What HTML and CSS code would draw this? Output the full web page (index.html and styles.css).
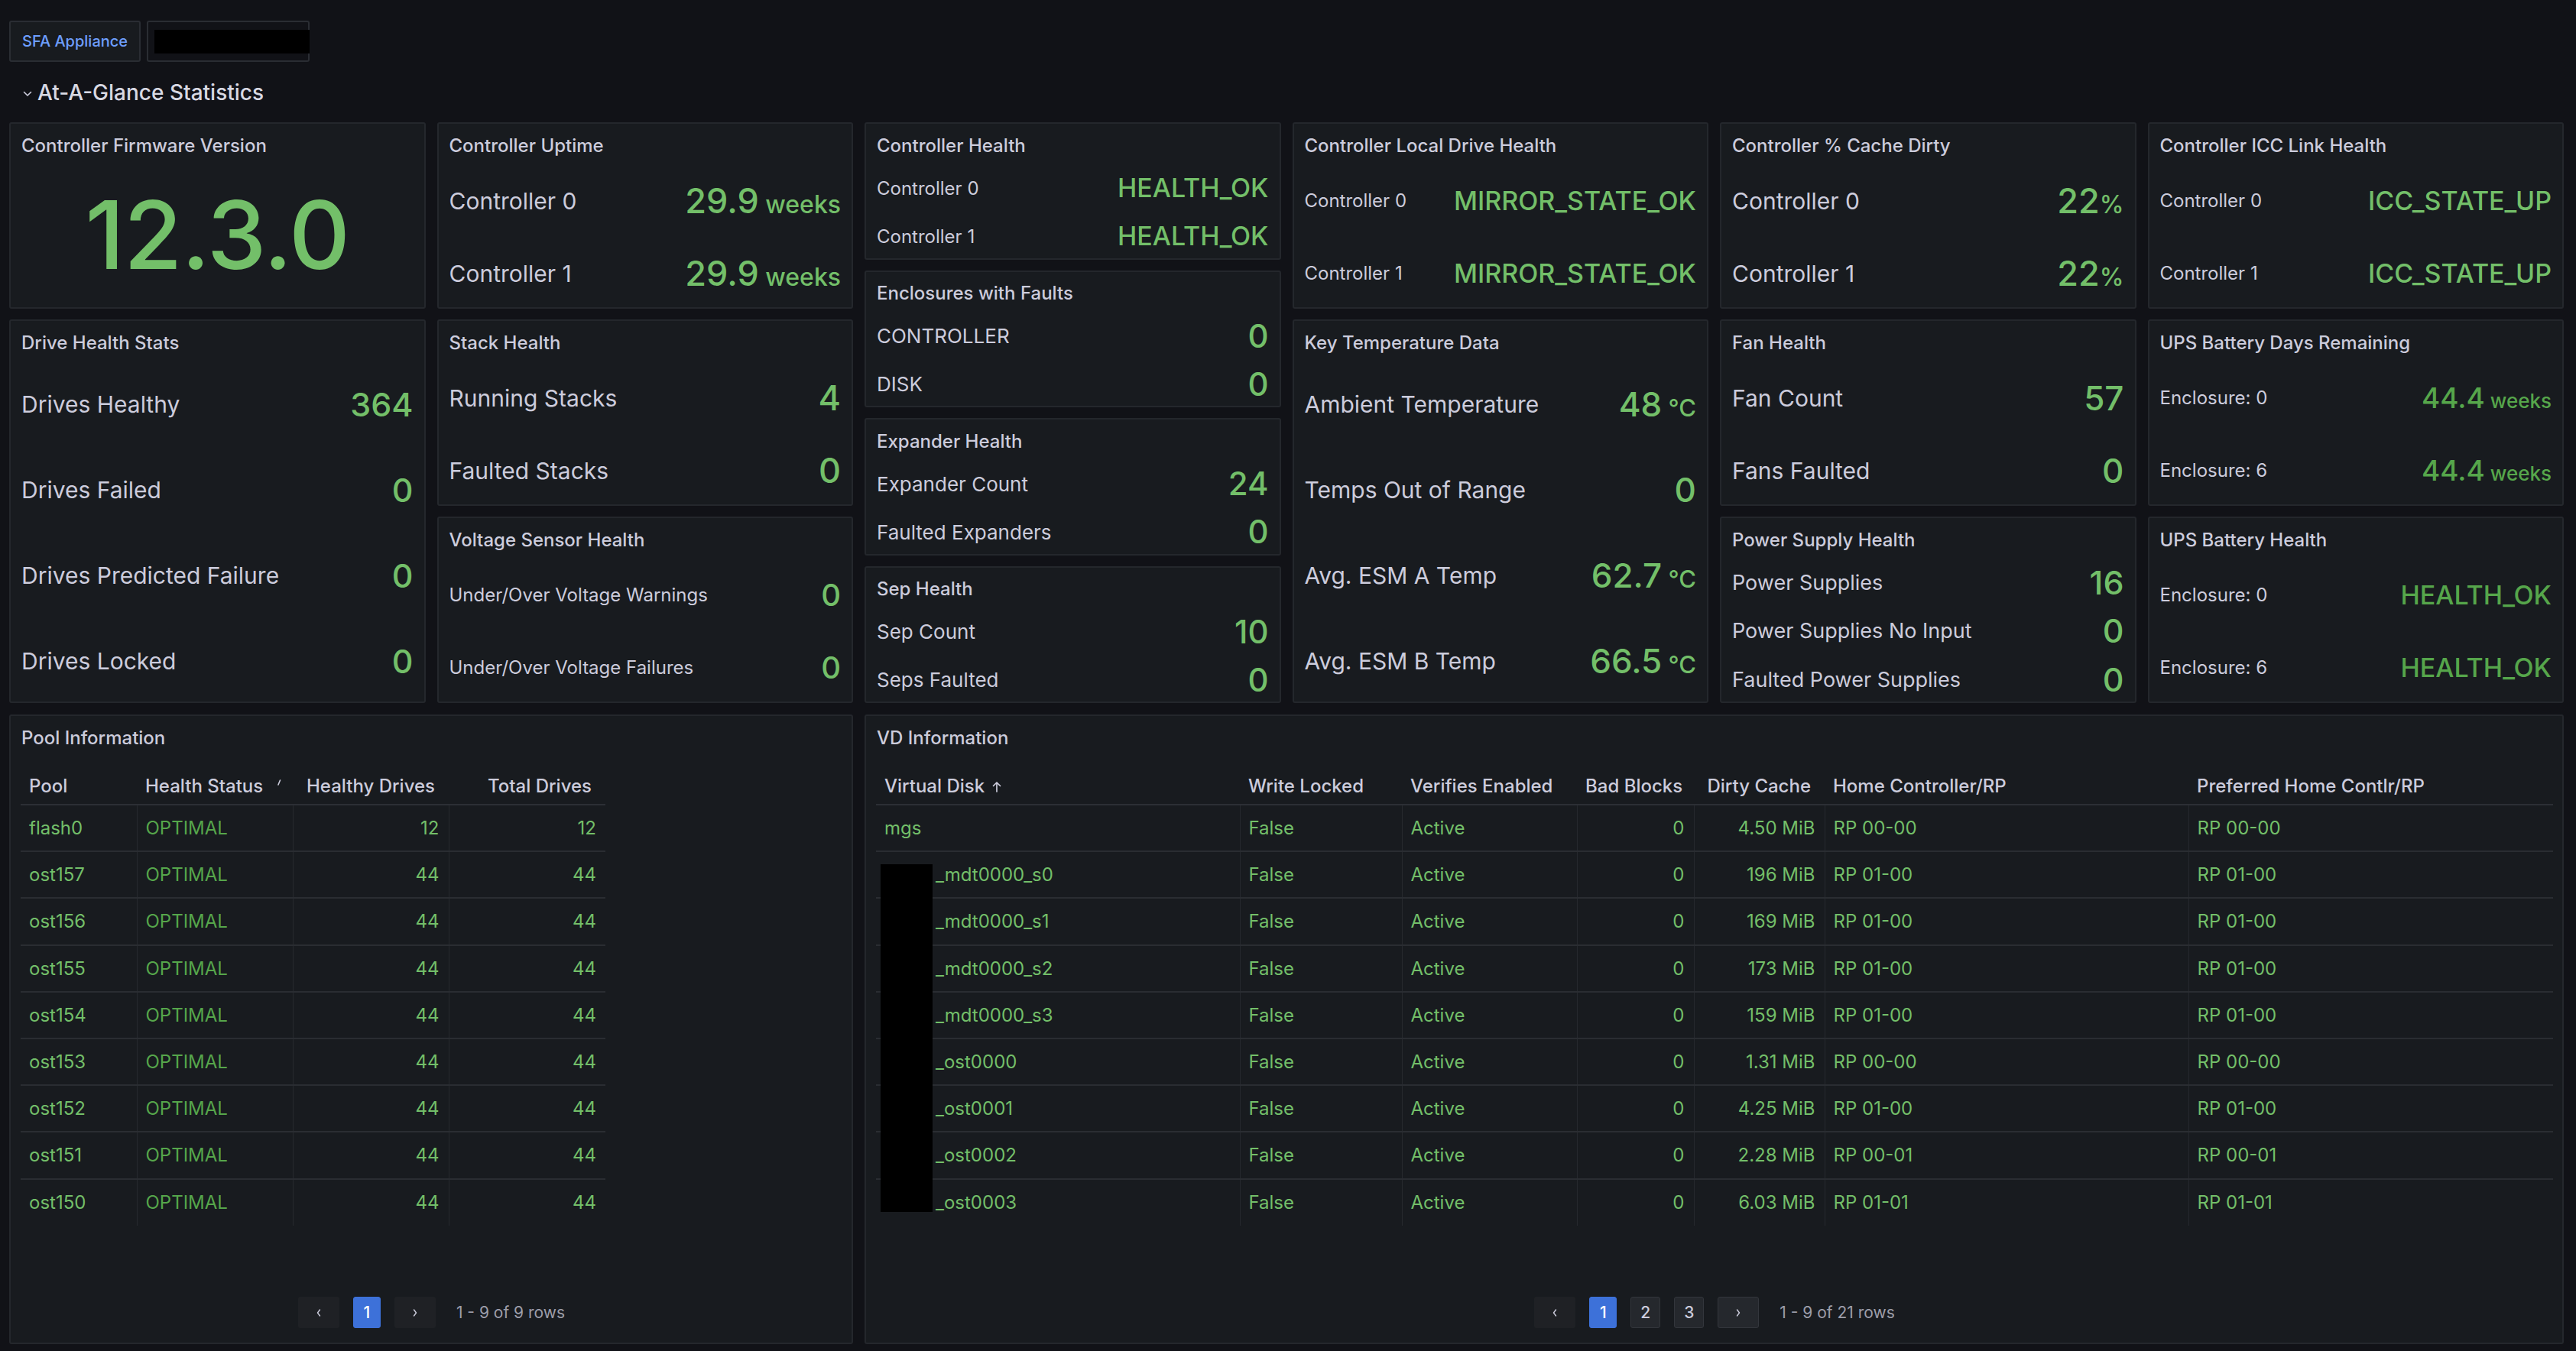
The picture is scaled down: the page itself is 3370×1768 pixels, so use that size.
FILE: index.html
```html
<!DOCTYPE html>
<html>
<head>
<meta charset="utf-8">
<title>SFA Appliance</title>
<link rel="stylesheet" href="styles.css">
</head>
<body>
<div class="page">
  <div class="vars">
    <div class="var-label">SFA Appliance</div>
    <div class="var-value"><span class="redact-bar"></span></div>
  </div>
  <div class="row-title">
    <svg class="chev" viewBox="0 0 12 8" width="12" height="8"><path d="M1.5 1.5 L6 6 L10.5 1.5" fill="none" stroke="#ccccdc" stroke-width="1.6" stroke-linecap="round" stroke-linejoin="round"/></svg>
    <span>At-A-Glance Statistics</span>
  </div>

  <div class="grid-top">
    <!-- column 1 -->
    <div class="col">
      <section class="panel r1">
        <div class="panel-header">Controller Firmware Version</div>
        <div class="stat-body center">
          <div class="big">12.3.0</div>
        </div>
      </section>
      <section class="panel grow sz-drive">
        <div class="panel-header">Drive Health Stats</div>
        <div class="stat-body">
          <div class="stat-row"><span class="lbl">Drives Healthy</span><span class="val">364</span></div>
          <div class="stat-row"><span class="lbl">Drives Failed</span><span class="val">0</span></div>
          <div class="stat-row"><span class="lbl">Drives Predicted Failure</span><span class="val">0</span></div>
          <div class="stat-row"><span class="lbl">Drives Locked</span><span class="val">0</span></div>
        </div>
      </section>
    </div>

    <!-- column 2 -->
    <div class="col">
      <section class="panel grow sz-uptime">
        <div class="panel-header">Controller Uptime</div>
        <div class="stat-body">
          <div class="stat-row"><span class="lbl">Controller 0</span><span class="val">29.9<span class="unit"> weeks</span></span></div>
          <div class="stat-row"><span class="lbl">Controller 1</span><span class="val">29.9<span class="unit"> weeks</span></span></div>
        </div>
      </section>
      <section class="panel grow sz-stack">
        <div class="panel-header">Stack Health</div>
        <div class="stat-body">
          <div class="stat-row"><span class="lbl">Running Stacks</span><span class="val">4</span></div>
          <div class="stat-row"><span class="lbl">Faulted Stacks</span><span class="val">0</span></div>
        </div>
      </section>
      <section class="panel grow sz-volt">
        <div class="panel-header">Voltage Sensor Health</div>
        <div class="stat-body">
          <div class="stat-row"><span class="lbl">Under/Over Voltage Warnings</span><span class="val">0</span></div>
          <div class="stat-row"><span class="lbl">Under/Over Voltage Failures</span><span class="val">0</span></div>
        </div>
      </section>
    </div>

    <!-- column 3 -->
    <div class="col">
      <section class="panel grow sz-ctrl">
        <div class="panel-header">Controller Health</div>
        <div class="stat-body">
          <div class="stat-row"><span class="lbl">Controller 0</span><span class="val">HEALTH_OK</span></div>
          <div class="stat-row"><span class="lbl">Controller 1</span><span class="val">HEALTH_OK</span></div>
        </div>
      </section>
      <section class="panel grow sz-small">
        <div class="panel-header">Enclosures with Faults</div>
        <div class="stat-body">
          <div class="stat-row"><span class="lbl">CONTROLLER</span><span class="val">0</span></div>
          <div class="stat-row"><span class="lbl">DISK</span><span class="val">0</span></div>
        </div>
      </section>
      <section class="panel grow sz-small">
        <div class="panel-header">Expander Health</div>
        <div class="stat-body">
          <div class="stat-row"><span class="lbl">Expander Count</span><span class="val">24</span></div>
          <div class="stat-row"><span class="lbl">Faulted Expanders</span><span class="val">0</span></div>
        </div>
      </section>
      <section class="panel grow sz-small">
        <div class="panel-header">Sep Health</div>
        <div class="stat-body">
          <div class="stat-row"><span class="lbl">Sep Count</span><span class="val">10</span></div>
          <div class="stat-row"><span class="lbl">Seps Faulted</span><span class="val">0</span></div>
        </div>
      </section>
    </div>

    <!-- column 4 -->
    <div class="col">
      <section class="panel r1 sz-ctrl">
        <div class="panel-header">Controller Local Drive Health</div>
        <div class="stat-body">
          <div class="stat-row"><span class="lbl">Controller 0</span><span class="val">MIRROR_STATE_OK</span></div>
          <div class="stat-row"><span class="lbl">Controller 1</span><span class="val">MIRROR_STATE_OK</span></div>
        </div>
      </section>
      <section class="panel grow sz-temp">
        <div class="panel-header">Key Temperature Data</div>
        <div class="stat-body">
          <div class="stat-row"><span class="lbl">Ambient Temperature</span><span class="val">48<span class="unit"> °C</span></span></div>
          <div class="stat-row"><span class="lbl">Temps Out of Range</span><span class="val">0</span></div>
          <div class="stat-row"><span class="lbl">Avg. ESM A Temp</span><span class="val">62.7<span class="unit"> °C</span></span></div>
          <div class="stat-row"><span class="lbl">Avg. ESM B Temp</span><span class="val">66.5<span class="unit"> °C</span></span></div>
        </div>
      </section>
    </div>

    <!-- column 5 -->
    <div class="col">
      <section class="panel grow sz-uptime">
        <div class="panel-header">Controller % Cache Dirty</div>
        <div class="stat-body">
          <div class="stat-row"><span class="lbl">Controller 0</span><span class="val">22<span class="unit">%</span></span></div>
          <div class="stat-row"><span class="lbl">Controller 1</span><span class="val">22<span class="unit">%</span></span></div>
        </div>
      </section>
      <section class="panel grow sz-fan">
        <div class="panel-header">Fan Health</div>
        <div class="stat-body">
          <div class="stat-row"><span class="lbl">Fan Count</span><span class="val">57</span></div>
          <div class="stat-row"><span class="lbl">Fans Faulted</span><span class="val">0</span></div>
        </div>
      </section>
      <section class="panel grow sz-power">
        <div class="panel-header">Power Supply Health</div>
        <div class="stat-body">
          <div class="stat-row"><span class="lbl">Power Supplies</span><span class="val">16</span></div>
          <div class="stat-row"><span class="lbl">Power Supplies No Input</span><span class="val">0</span></div>
          <div class="stat-row"><span class="lbl">Faulted Power Supplies</span><span class="val">0</span></div>
        </div>
      </section>
    </div>

    <!-- column 6 -->
    <div class="col">
      <section class="panel grow sz-ctrl">
        <div class="panel-header">Controller ICC Link Health</div>
        <div class="stat-body">
          <div class="stat-row"><span class="lbl">Controller 0</span><span class="val">ICC_STATE_UP</span></div>
          <div class="stat-row"><span class="lbl">Controller 1</span><span class="val">ICC_STATE_UP</span></div>
        </div>
      </section>
      <section class="panel grow sz-ups dark">
        <div class="panel-header">UPS Battery Days Remaining</div>
        <div class="stat-body">
          <div class="stat-row"><span class="lbl">Enclosure: 0</span><span class="val">44.4<span class="unit"> weeks</span></span></div>
          <div class="stat-row"><span class="lbl">Enclosure: 6</span><span class="val">44.4<span class="unit"> weeks</span></span></div>
        </div>
      </section>
      <section class="panel grow sz-upsh dark">
        <div class="panel-header">UPS Battery Health</div>
        <div class="stat-body">
          <div class="stat-row"><span class="lbl">Enclosure: 0</span><span class="val">HEALTH_OK</span></div>
          <div class="stat-row"><span class="lbl">Enclosure: 6</span><span class="val">HEALTH_OK</span></div>
        </div>
      </section>
    </div>
  </div>

  <div class="grid-bottom">
    <section class="panel pool">
      <div class="panel-header">Pool Information</div>
      <div class="table-body">
        <table class="tbl pool-tbl">
          <colgroup><col class="c152"><col class="c204"><col class="c204"><col class="c205"></colgroup>
          <thead>
            <tr><th>Pool</th><th class="sorted">Health Status<svg class="sort-tick" viewBox="0 0 6 12" width="6" height="12"><path d="M4.5 2 L2 8" stroke="#ccccdc" stroke-width="1.6" stroke-linecap="round"/></svg></th><th class="r">Healthy Drives</th><th class="r">Total Drives</th></tr>
          </thead>
          <tbody>
            <tr><td>flash0</td><td class="dk">OPTIMAL</td><td class="r">12</td><td class="r">12</td></tr>
            <tr><td>ost157</td><td class="dk">OPTIMAL</td><td class="r">44</td><td class="r">44</td></tr>
            <tr><td>ost156</td><td class="dk">OPTIMAL</td><td class="r">44</td><td class="r">44</td></tr>
            <tr><td>ost155</td><td class="dk">OPTIMAL</td><td class="r">44</td><td class="r">44</td></tr>
            <tr><td>ost154</td><td class="dk">OPTIMAL</td><td class="r">44</td><td class="r">44</td></tr>
            <tr><td>ost153</td><td class="dk">OPTIMAL</td><td class="r">44</td><td class="r">44</td></tr>
            <tr><td>ost152</td><td class="dk">OPTIMAL</td><td class="r">44</td><td class="r">44</td></tr>
            <tr><td>ost151</td><td class="dk">OPTIMAL</td><td class="r">44</td><td class="r">44</td></tr>
            <tr><td>ost150</td><td class="dk">OPTIMAL</td><td class="r">44</td><td class="r">44</td></tr>
          </tbody>
        </table>
        <div class="pager">
          <span class="pbtn dis"><svg viewBox="0 0 8 12" width="8" height="12"><path d="M5.5 2 L2.5 6 L5.5 10" fill="none" stroke="#ccccdc" stroke-width="1.4" stroke-linecap="round" stroke-linejoin="round"/></svg></span>
          <span class="pnum act">1</span>
          <span class="pbtn dis"><svg viewBox="0 0 8 12" width="8" height="12"><path d="M2.5 2 L5.5 6 L2.5 10" fill="none" stroke="#ccccdc" stroke-width="1.4" stroke-linecap="round" stroke-linejoin="round"/></svg></span>
          <span class="pinfo">1 - 9 of 9 rows</span>
        </div>
      </div>
    </section>

    <section class="panel vd">
      <div class="panel-header">VD Information</div>
      <div class="table-body">
        <table class="tbl vd-tbl">
          <colgroup><col class="c476"><col class="c212"><col class="c229"><col class="c153"><col class="c171"><col class="c476"><col class="c477"></colgroup>
          <thead>
            <tr><th>Virtual Disk<svg class="sort-up" viewBox="0 0 12 16" width="12" height="16"><path d="M6 14 V2 M1.5 6.5 L6 2 L10.5 6.5" fill="none" stroke="#ccccdc" stroke-width="1.7" stroke-linecap="round" stroke-linejoin="round"/></svg></th><th>Write Locked</th><th>Verifies Enabled</th><th class="r">Bad Blocks</th><th class="r">Dirty Cache</th><th>Home Controller/RP</th><th>Preferred Home Contlr/RP</th></tr>
          </thead>
          <tbody>
            <tr><td>mgs</td><td>False</td><td>Active</td><td class="r">0</td><td class="r">4.50 MiB</td><td>RP 00-00</td><td>RP 00-00</td></tr>
            <tr><td class="hid">_mdt0000_s0</td><td>False</td><td>Active</td><td class="r">0</td><td class="r">196 MiB</td><td>RP 01-00</td><td>RP 01-00</td></tr>
            <tr><td class="hid">_mdt0000_s1</td><td>False</td><td>Active</td><td class="r">0</td><td class="r">169 MiB</td><td>RP 01-00</td><td>RP 01-00</td></tr>
            <tr><td class="hid">_mdt0000_s2</td><td>False</td><td>Active</td><td class="r">0</td><td class="r">173 MiB</td><td>RP 01-00</td><td>RP 01-00</td></tr>
            <tr><td class="hid">_mdt0000_s3</td><td>False</td><td>Active</td><td class="r">0</td><td class="r">159 MiB</td><td>RP 01-00</td><td>RP 01-00</td></tr>
            <tr><td class="hid">_ost0000</td><td>False</td><td>Active</td><td class="r">0</td><td class="r">1.31 MiB</td><td>RP 00-00</td><td>RP 00-00</td></tr>
            <tr><td class="hid">_ost0001</td><td>False</td><td>Active</td><td class="r">0</td><td class="r">4.25 MiB</td><td>RP 01-00</td><td>RP 01-00</td></tr>
            <tr><td class="hid">_ost0002</td><td>False</td><td>Active</td><td class="r">0</td><td class="r">2.28 MiB</td><td>RP 00-01</td><td>RP 00-01</td></tr>
            <tr><td class="hid">_ost0003</td><td>False</td><td>Active</td><td class="r">0</td><td class="r">6.03 MiB</td><td>RP 01-01</td><td>RP 01-01</td></tr>
          </tbody>
        </table>
        <div class="redact-col"></div>
        <div class="pager">
          <span class="pbtn dis"><svg viewBox="0 0 8 12" width="8" height="12"><path d="M5.5 2 L2.5 6 L5.5 10" fill="none" stroke="#ccccdc" stroke-width="1.4" stroke-linecap="round" stroke-linejoin="round"/></svg></span>
          <span class="pnum act">1</span>
          <span class="pnum">2</span>
          <span class="pnum">3</span>
          <span class="pbtn en"><svg viewBox="0 0 8 12" width="8" height="12"><path d="M2.5 2 L5.5 6 L2.5 10" fill="none" stroke="#ccccdc" stroke-width="1.4" stroke-linecap="round" stroke-linejoin="round"/></svg></span>
          <span class="pinfo">1 - 9 of 21 rows</span>
        </div>
      </div>
    </section>
  </div>
</div>
</body>
</html>
```

FILE: styles.css
```css
* { box-sizing: border-box; }
html, body { margin: 0; padding: 0; background: #111217; }
body {
  font-family: Inter, "Noto Sans", "Liberation Sans", sans-serif;
  color: #ccccdc;
  width: 3370px;
  height: 1768px;
  overflow: hidden;
}
.page { padding: 27px 16px 0 12px; }

/* variables bar */
.vars { display: flex; gap: 8px; height: 54px; }
.var-label {
  display: flex; align-items: center;
  padding: 0 15px;
  background: #181b1f;
  border: 2px solid #2a2d33;
  border-radius: 3px;
  color: #6e9fff;
  font-size: 20px;
  font-weight: 500;
}
.var-value {
  width: 213px;
  display: flex; align-items: center;
  padding-left: 8px;
  background: #111217;
  border: 2px solid #2a2d33;
  border-radius: 3px;
}
.redact-bar { display: block; width: 205px; height: 31px; background: #000; margin-right: -2px; }

/* row title */
.row-title {
  height: 79px;
  display: flex; align-items: center; gap: 7px;
  padding-left: 18px;
  font-size: 28px; font-weight: 500; color: #d8d9e3;
}
.chev { margin-top: 4px; }

/* grids */
.grid-top {
  display: grid;
  grid-template-columns: repeat(6, 1fr);
  column-gap: 15px;
  height: 760px;
}
.col { display: flex; flex-direction: column; gap: 14px; min-width: 0; }
.grid-bottom {
  display: grid;
  grid-template-columns: repeat(6, 1fr);
  column-gap: 15px;
  margin-top: 15px;
  height: 824px;
}
.pool { grid-column: span 2; }
.vd { grid-column: span 4; }

/* panels */
.panel {
  background: #181b1f;
  border: 2px solid #24272c;
  border-radius: 3px;
  display: flex; flex-direction: column;
  min-width: 0;
  min-height: 0;
}
.r1 { height: 244px; flex: none; }
.grow { flex: 1 1 0; }
.panel-header {
  height: 56px; flex: none;
  display: flex; align-items: center;
  padding: 0 14px;
  font-size: 24px; font-weight: 500; color: #ccccdc;
  white-space: nowrap;
}

/* stat */
.stat-body {
  flex: 1;
  display: flex; flex-direction: column;
  padding: 0 14px;
  margin: -3px 0 -3px 0;
}
.stat-body.center { align-items: center; justify-content: center; margin: 0; padding-bottom: 6px; }
.big { font-size: 124px; font-weight: 500; color: #73bf69; line-height: 1; letter-spacing: -1px; }
.stat-row {
  flex: 1;
  display: flex; align-items: center; justify-content: space-between;
  white-space: nowrap;
}
.lbl { color: #ccccdc; font-weight: 400; }
.val { color: #73bf69; font-weight: 500; line-height: 1; }
.dark .val { color: #56a64b; }

.sz-uptime .lbl { font-size: 30px; }
.sz-uptime .val { font-size: 45px; }
.sz-uptime .unit { font-size: 32px; }

.sz-ctrl .lbl { font-size: 24px; }
.sz-ctrl .val { font-size: 34px; }

.sz-drive .lbl { font-size: 30px; }
.sz-drive .val { font-size: 43px; }

.sz-stack .lbl { font-size: 30px; }
.sz-stack .val { font-size: 45px; }

.sz-volt .lbl { font-size: 24px; }
.sz-volt .val { font-size: 40px; }

.sz-small .lbl { font-size: 26px; }
.sz-small .val { font-size: 42px; }

.sz-temp .lbl { font-size: 30px; }
.sz-temp .val { font-size: 44px; }
.sz-temp .unit { font-size: 31px; }

.sz-fan .lbl { font-size: 30px; }
.sz-fan .val { font-size: 44px; }

.sz-power .lbl { font-size: 27px; }
.sz-power .val { font-size: 43px; }

.sz-ups .lbl { font-size: 24px; }
.sz-ups .val { font-size: 37px; }
.sz-ups .unit { font-size: 26px; }

.sz-upsh .lbl { font-size: 24px; }
.sz-upsh .val { font-size: 34px; }

/* tables */
.table-body {
  flex: 1;
  position: relative;
  display: flex; flex-direction: column;
  padding: 12px 12px 19px 13px;
}
.tbl {
  table-layout: fixed;
  border-collapse: collapse;
  font-size: 24px;
}
.pool-tbl { width: 765px; }
.vd-tbl { width: 100%; }
.c152 { width: 152px; } .c204 { width: 204px; } .c205 { width: 205px; }
.c476 { width: 476px; } .c212 { width: 212px; } .c229 { width: 229px; }
.c153 { width: 153px; } .c171 { width: 171px; } .c477 { width: 477px; }
.tbl th {
  height: 48px;
  text-align: left;
  font-weight: 500;
  color: #ccccdc;
  padding: 0 11px;
  white-space: nowrap;
  border-bottom: 2px solid #2c2f35;
}
.tbl td {
  height: 61.2px;
  padding: 0 11px;
  color: #73bf69;
  white-space: nowrap;
  border-bottom: 2px solid #2a2d32;
  border-left: 1px solid #26292e;
}
.tbl td:first-child { border-left: none; }
.tbl tbody tr:last-child td { border-bottom: none; }
.tbl .r { text-align: right; padding-right: 12px; }
.tbl th.r { padding-right: 18px; }
.tbl td.dk { color: #56a64b; }
.tbl td.hid { padding-left: 78px; }
.sorted { position: relative; }
.sort-tick { position: absolute; left: 183px; top: 14px; }
.sort-up { margin-left: 10px; vertical-align: -1px; }

.redact-col {
  position: absolute;
  left: 19px; top: 138px;
  width: 68px; height: 455px;
  background: #000;
}

/* pager */
.pager {
  margin-top: auto;
  display: flex; align-items: center; justify-content: center;
  gap: 18px;
  height: 41px;
}
.pbtn, .pnum {
  height: 41px;
  display: flex; align-items: center; justify-content: center;
  border-radius: 3px;
  font-size: 21px; font-weight: 500;
}
.pbtn { width: 54px; }
.pbtn.dis { background: #1f2125; }
.pbtn.en { background: #25282d; border: 1px solid #33363c; }
.pnum { min-width: 39px; padding: 0 10px; background: #25282d; border: 1px solid #33363c; color: #ccccdc; }
.pnum.act { min-width: 36px; background: #3d71d9; border-color: #3d71d9; color: #fff; }
.pinfo { font-size: 21px; color: #9d9eaa; margin-left: 9px; }
```
